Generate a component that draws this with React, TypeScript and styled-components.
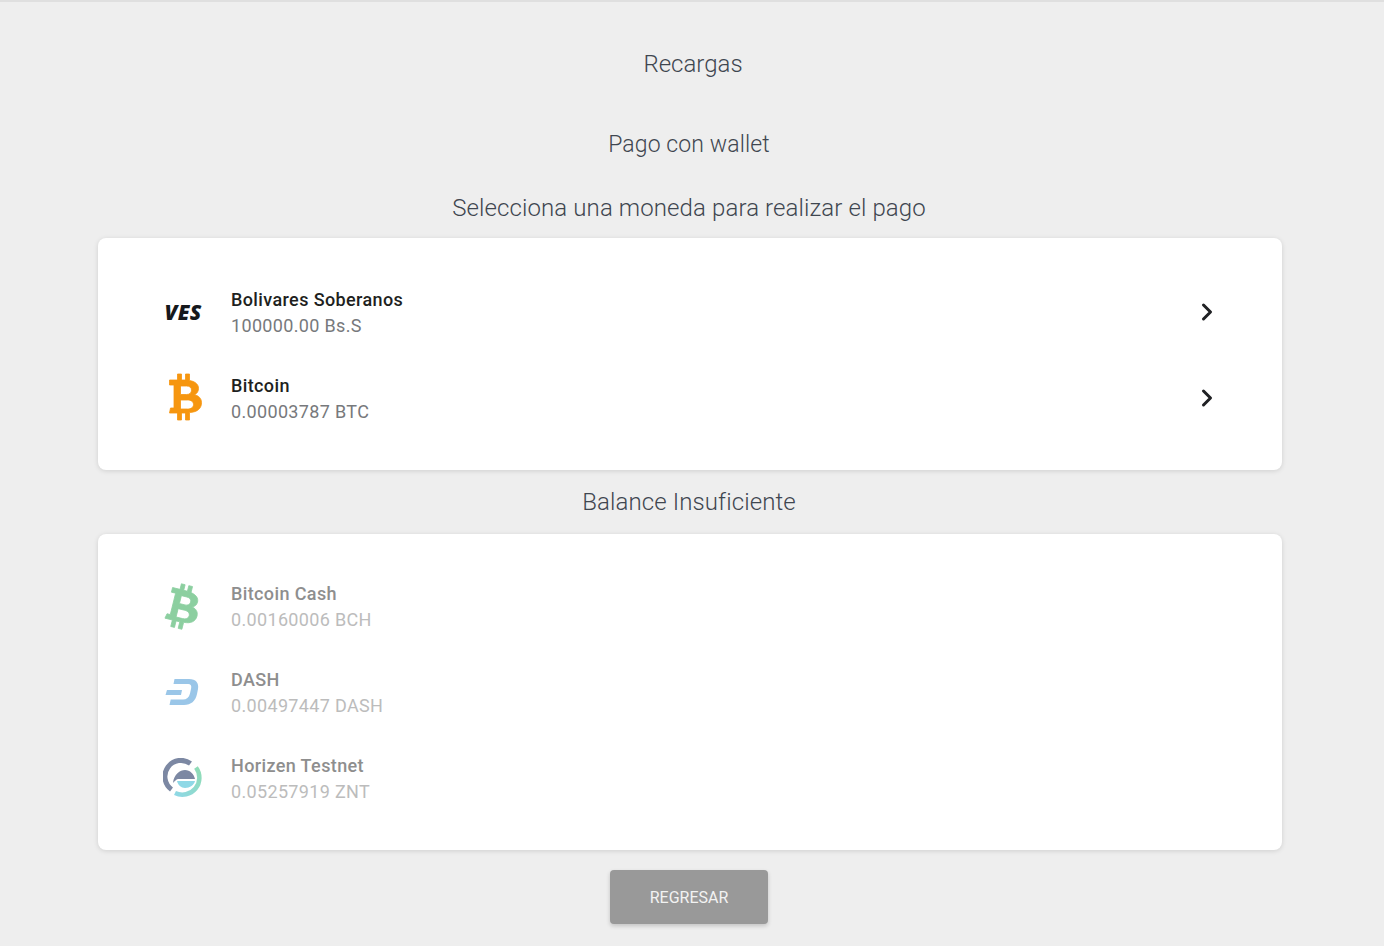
import React from 'react'
import styled, { createGlobalStyle } from 'styled-components'
import { ChevronRight } from 'lucide-react'

const GlobalStyle = createGlobalStyle`
  html, body {
    margin: 0;
    padding: 0;
    height: 946px;
    overflow: hidden;
    background: #eeeeee;
    font-family: Roboto, "Liberation Sans", sans-serif;
  }
`

const Page = styled.div`
  box-sizing: border-box;
  height: 946px;
  border-top: 2px solid #dfdfdf;
  padding: 0 102px 0 98px;
  display: flex;
  flex-direction: column;
`

const PageTitle = styled.h1`
  margin: 0;
  padding: 34px 0 0 6px;
  height: 46px;
  font-size: 24px;
  line-height: 56px;
  font-weight: 300;
  color: #3f4650;
  text-align: center;
`

const Heading = styled.h2<{ $top: number; $size?: number }>`
  margin: ${({ $top }) => $top}px 0 0;
  padding-right: 2px;
  height: 32px;
  font-size: ${({ $size }) => $size || 24}px;
  line-height: 32px;
  font-weight: 300;
  letter-spacing: 0.11px;
  color: #3f4650;
  text-align: center;
`

const Card = styled.div<{ $top: number; $padTop: number; $padBottom: number }>`
  margin-top: ${({ $top }) => $top}px;
  padding: ${({ $padTop }) => $padTop}px 60px ${({ $padBottom }) => $padBottom}px 62px;
  background: #fff;
  border-radius: 8px;
  box-shadow: 0 1px 5px rgba(0, 0, 0, 0.13);
`

const Row = styled.div`
  height: 86px;
  display: flex;
  align-items: center;
  gap: 25px;
`

const IconSlot = styled.div`
  width: 46px;
  height: 50px;
  display: flex;
  align-items: center;
  justify-content: center;
  flex-shrink: 0;
`

const VesMark = styled.span`
  font-family: "Open Sans", Roboto, sans-serif;
  font-size: 21px;
  font-weight: 800;
  font-style: italic;
  letter-spacing: 0.2px;
  color: #15181c;
`

const Info = styled.div`
  flex: 1;
  padding-top: 2px;
  display: flex;
  flex-direction: column;
  gap: 4px;
`

const CoinName = styled.div<{ $disabled?: boolean }>`
  font-size: 18px;
  line-height: 22px;
  font-weight: 500;
  letter-spacing: 0.38px;
  color: ${({ $disabled }) => ($disabled ? '#8e8e8e' : '#1e1f21')};
`

const CoinAmount = styled.div<{ $disabled?: boolean }>`
  font-size: 18px;
  line-height: 22px;
  font-weight: 400;
  letter-spacing: 0.34px;
  color: ${({ $disabled }) => ($disabled ? '#bcbcbc' : '#77797c')};
`

const Arrow = styled(ChevronRight)`
  width: 28px;
  height: 28px;
  color: #202124;
  stroke-width: 2.6;
  margin-right: 1px;
`

const BitcoinSvg = styled.svg<{ $tilt?: number; $shift?: number; $drop?: number }>`
  overflow: visible;
  margin-left: ${({ $shift }) => $shift || 0}px;
  margin-top: ${({ $drop }) => $drop || 0}px;
  transform: rotate(${({ $tilt }) => $tilt || 0}deg);
`

const Footer = styled.div`
  display: flex;
  justify-content: center;
  margin-top: 20px;
  padding-right: 2px;
`

const BackButton = styled.button`
  width: 158px;
  height: 54px;
  border: none;
  border-radius: 4px;
  background: #999999;
  color: #f2f2f2;
  font-family: inherit;
  font-size: 16px;
  font-weight: 400;
  box-shadow: 0 2px 4px rgba(0, 0, 0, 0.18);
`

type BitcoinProps = {
  color: string
  width: number
  height: number
  tilt?: number
  shift?: number
  drop?: number
}

const BitcoinIcon = ({ color, width, height, tilt, shift, drop }: BitcoinProps) => (
  <BitcoinSvg width={width} height={height} viewBox="0 0 32 46" $tilt={tilt} $shift={shift} $drop={drop}>
    <path
      fillRule="evenodd"
      fill={color}
      stroke={color}
      strokeWidth="0.8"
      d="M8 0h4v6h4V0h4v6.5C26 7.5 29 10.5 29 14.5c0 3-1.5 5-4 6.2 4 1 7 3.5 7 8 0 6-4.5 9.5-12 9.8V46h-4v-7h-4v7H8v-7H0l1-5h3.5V11H0V6h8zM11 12v8.5h6c3 0 5-1.5 5-4.3S20 12 17 12zM11 26v9h7c3.5 0 6-1.6 6-4.5S21.5 26 18 26z"
    />
  </BitcoinSvg>
)

const DashIcon = () => (
  <svg width="36" height="32" viewBox="10 10 36 32">
    <path
      d="M19.5 13H34c7 0 10 4 9 10l-1 5c-1.5 7-6 11-13 11H14.5l1.2-5.5H28c3.5 0 6-2 7-6l1.2-5.5c.5-2.5-.8-4-3-4H18.5z"
      fill="#9ac6e8"
    />
    <path d="M12 24h15l-1 5H10.5z" fill="#9ac6e8" />
  </svg>
)

const HorizenIcon = () => (
  <svg width="40" height="40" viewBox="0 0 40 40">
    <defs>
      <linearGradient id="znt-arc" x1="1" y1="0" x2="0" y2="1">
        <stop offset="0" stopColor="#8fdcb4" />
        <stop offset="1" stopColor="#8fd8e6" />
      </linearGradient>
    </defs>
    <path d="M8.5 31.5A16 16 0 0 1 27.5 5.5" fill="none" stroke="#7c88a3" strokeWidth="5" />
    <path d="M10 25C11 16 17 12 22 12C27 12 31 16 32 21H15C13 21.5 12 23 10 25Z" fill="#7c88a3" />
    <path d="M14 23H32C31 27 27 30 22 30C18 30 15 27 14 23Z" fill="#8fd8e6" />
    <path d="M33 9.5A17 17 0 0 1 12 35" fill="none" stroke="url(#znt-arc)" strokeWidth="4.5" />
  </svg>
)

type Coin = { name: string; amount: string; icon: React.ReactNode }

const available: Coin[] = [
  { name: 'Bolivares Soberanos', amount: '100000.00 Bs.S', icon: <VesMark>VES</VesMark> },
  {
    name: 'Bitcoin',
    amount: '0.00003787 BTC',
    icon: <BitcoinIcon color="#f6960f" width={33} height={46} shift={4} drop={-2} />,
  },
]

const insufficient: Coin[] = [
  {
    name: 'Bitcoin Cash',
    amount: '0.00160006 BCH',
    icon: <BitcoinIcon color="#8ccfa0" width={31} height={44} tilt={14} drop={2} />,
  },
  { name: 'DASH', amount: '0.00497447 DASH', icon: <DashIcon /> },
  { name: 'Horizen Testnet', amount: '0.05257919 ZNT', icon: <HorizenIcon /> },
]

export default function App() {
  return (
    <>
      <GlobalStyle />
      <Page>
        <PageTitle>Recargas</PageTitle>
        <Heading $top={47} $size={23}>Pago con wallet</Heading>
        <Heading $top={31}>Selecciona una moneda para realizar el pago</Heading>
        <Card $top={14} $padTop={31} $padBottom={29}>
          {available.map((coin) => (
            <Row key={coin.name}>
              <IconSlot>{coin.icon}</IconSlot>
              <Info>
                <CoinName>{coin.name}</CoinName>
                <CoinAmount>{coin.amount}</CoinAmount>
              </Info>
              <Arrow />
            </Row>
          ))}
        </Card>
        <Heading $top={16}>Balance Insuficiente</Heading>
        <Card $top={16} $padTop={29} $padBottom={29}>
          {insufficient.map((coin) => (
            <Row key={coin.name}>
              <IconSlot>{coin.icon}</IconSlot>
              <Info>
                <CoinName $disabled>{coin.name}</CoinName>
                <CoinAmount $disabled>{coin.amount}</CoinAmount>
              </Info>
            </Row>
          ))}
        </Card>
        <Footer>
          <BackButton>REGRESAR</BackButton>
        </Footer>
      </Page>
    </>
  )
}
